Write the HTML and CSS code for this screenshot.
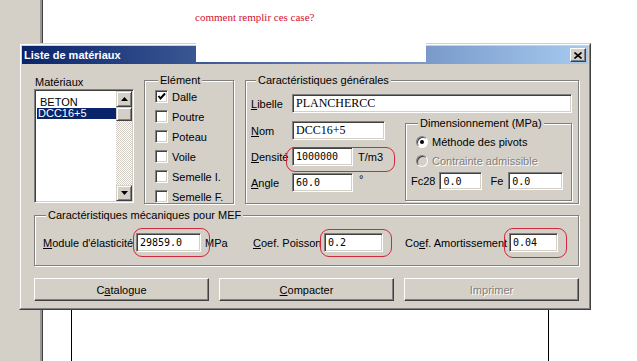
FILE: index.html
```html
<!DOCTYPE html>
<html lang="fr">
<head>
    <meta charset="UTF-8">
    <title>Liste de matériaux</title>
    <link rel="stylesheet" href="styles.css">
</head>
<body>
    <div class="desk">
        <div class="sidebar"></div>
        <div class="page">
            <p class="question">comment remplir ces case?</p>
            <div class="doc-table"></div>
        </div>
    </div>

    <div class="cover"></div>

    <div class="window">
        <div class="window-inner">
            <div class="titlebar">
                <span class="title">Liste de matériaux</span>
                <span class="close-btn">
                    <svg width="8" height="7" viewBox="0 0 8 7"><path d="M0.5 0.5 L7.5 6.5 M7.5 0.5 L0.5 6.5" stroke="#000" stroke-width="1.6"/></svg>
                </span>
            </div>

            <div class="dialog-body">
                <div class="top-row">
                    <div class="list-col">
                        <div class="list-label">Matériaux</div>
                        <div class="listbox">
                            <div class="list-items">
                                <div class="item">BETON</div>
                                <div class="item selected">DCC16+5</div>
                            </div>
                            <div class="scrollbar">
                                <div class="sb-btn">
                                    <svg width="7" height="4" viewBox="0 0 7 4"><path d="M3.5 0 L7 4 L0 4 Z" fill="#000"/></svg>
                                </div>
                                <div class="sb-thumb"></div>
                                <div class="sb-track"></div>
                                <div class="sb-btn">
                                    <svg width="7" height="4" viewBox="0 0 7 4"><path d="M0 0 L7 0 L3.5 4 Z" fill="#000"/></svg>
                                </div>
                            </div>
                        </div>
                    </div>

                    <div class="group group-element">
                        <span class="legend legend-element">Elément</span>
                        <div class="check-list">
                            <div class="check-row">
                                <span class="checkbox">
                                    <svg width="9" height="9" viewBox="0 0 9 9"><polyline points="1.5,4 3.5,6.5 8,1.5" fill="none" stroke="#000" stroke-width="2"/></svg>
                                </span>
                                Dalle
                            </div>
                            <div class="check-row"><span class="checkbox"></span>Poutre</div>
                            <div class="check-row"><span class="checkbox"></span>Poteau</div>
                            <div class="check-row"><span class="checkbox"></span>Voile</div>
                            <div class="check-row"><span class="checkbox"></span>Semelle I.</div>
                            <div class="check-row"><span class="checkbox"></span>Semelle F.</div>
                        </div>
                    </div>

                    <div class="group group-general">
                        <span class="legend">Caractéristiques générales</span>
                        <div class="field-row">
                            <label class="field-label"><u>L</u>ibelle</label>
                            <input class="field serif wide" type="text" value="PLANCHERCC">
                        </div>
                        <div class="general-lower">
                            <div class="general-fields">
                                <div class="field-row">
                                    <label class="field-label"><u>N</u>om</label>
                                    <input class="field serif w-nom" type="text" value="DCC16+5">
                                </div>
                                <div class="field-row">
                                    <label class="field-label"><u>D</u>ensité</label>
                                    <input class="field mono w-short" type="text" value="1000000">
                                    <span class="unit">T/m3</span>
                                </div>
                                <div class="field-row">
                                    <label class="field-label"><u>A</u>ngle</label>
                                    <input class="field mono w-short" type="text" value="60.0">
                                    <span class="unit degree">°</span>
                                </div>
                            </div>

                            <div class="group group-dim">
                                <span class="legend">Dimensionnement (MPa)</span>
                                <div class="radio-row"><span class="radio checked"></span>Méthode des pivots</div>
                                <div class="radio-row disabled"><span class="radio"></span>Contrainte admissible</div>
                                <div class="dim-inputs">
                                    <span>Fc28</span>
                                    <input class="field mono w-fc" type="text" value="0.0">
                                    <span class="fe-label">Fe</span>
                                    <input class="field mono w-fe" type="text" value="0.0">
                                </div>
                            </div>
                        </div>
                    </div>
                </div>

                <div class="group group-mef">
                    <span class="legend">Caractéristiques mécaniques pour MEF</span>
                    <div class="mef-row">
                        <span><u>M</u>odule d'élasticité</span>
                        <input class="field mono" type="text" value="29859.0">
                        <span class="unit">MPa</span>
                        <span><u>C</u>oef. Poisson</span>
                        <input class="field mono" type="text" value="0.2">
                        <span></span>
                        <span>Co<u>e</u>f. Amortissement</span>
                        <input class="field mono" type="text" value="0.04">
                    </div>
                </div>

                <div class="buttons">
                    <button class="btn">C<u>a</u>talogue</button>
                    <button class="btn"><u>C</u>ompacter</button>
                    <button class="btn disabled">Imprimer</button>
                </div>
            </div>
        </div>

        <span class="mark mark-densite"></span>
        <span class="mark mark-module"></span>
        <span class="mark mark-poisson"></span>
        <span class="mark mark-amort"></span>
    </div>
</body>
</html>
```

FILE: styles.css
```css
body {
    margin: 0;
    width: 637px;
    height: 361px;
    overflow: hidden;
    background-color: #fff;
    font-family: "Liberation Sans", Arial, sans-serif;
    font-size: 11px;
    color: #000;
    position: relative;
}
.desk {
    display: flex;
    height: 361px;
}
.sidebar {
    width: 42px;
    background-color: #d4d0c8;
    border-right: 1px solid #404040;
    box-shadow: inset -2px 0 #9a9892;
}
.page {
    flex: 1;
    display: flex;
    flex-direction: column;
    padding-left: 2px;
}
.question {
    margin: 11px 0 0 150px;
    font-family: "Liberation Serif", "Times New Roman", serif;
    font-size: 11px;
    line-height: 13px;
    color: #d4102e;
}
.doc-table {
    margin-top: auto;
    margin-left: 26px;
    width: 476px;
    height: 52px;
    border-left: 1px solid #000;
    border-right: 1px solid #000;
}
.cover {
    position: absolute;
    left: 196px;
    top: 42px;
    width: 230px;
    height: 20px;
    background-color: #fff;
    z-index: 2;
}

/* dialog window */
.window {
    position: absolute;
    left: 19px;
    top: 43px;
    width: 572px;
    height: 267px;
    box-sizing: border-box;
    background-color: #d4d0c8;
    border: 1px solid;
    border-color: #d4d0c8 #404040 #404040 #d4d0c8;
}
.window-inner {
    height: 100%;
    box-sizing: border-box;
    border: 1px solid;
    border-color: #fff #808080 #808080 #fff;
    padding: 1px;
}
.titlebar {
    height: 18px;
    display: flex;
    align-items: center;
    justify-content: space-between;
    padding: 0 2px;
    background: linear-gradient(to right, #0a246a, #a6caf0);
}
.title {
    color: #fff;
    font-weight: bold;
    font-size: 11px;
}
.close-btn {
    width: 16px;
    height: 14px;
    box-sizing: border-box;
    display: flex;
    align-items: center;
    justify-content: center;
    background-color: #d4d0c8;
    border: 1px solid;
    border-color: #fff #404040 #404040 #fff;
    box-shadow: inset -1px -1px #808080;
}
.dialog-body {
    padding: 12px 9px 6px 12px;
}

/* top row */
.top-row {
    display: flex;
}
.list-col {
    width: 100px;
}
.list-label {
    line-height: 13px;
    padding-left: 1px;
}
.listbox {
    height: 114px;
    box-sizing: border-box;
    display: flex;
    background-color: #fff;
    border: 1px solid;
    border-color: #808080 #fff #fff #808080;
    box-shadow: inset 1px 1px #404040, inset -1px -1px #d4d0c8;
    padding: 1px;
}
.list-items {
    flex: 1;
    padding-top: 6px;
    font-family: "Liberation Sans", Arial, sans-serif;
    font-size: 11px;
}
.item {
    height: 11px;
    line-height: 11px;
    padding-left: 4px;
}
.item.selected {
    background-color: #0a246a;
    color: #fff;
    margin-left: 1px;
    padding-left: 1px;
}
.scrollbar {
    width: 16px;
    display: flex;
    flex-direction: column;
}
.sb-btn,
.sb-thumb {
    height: 16px;
    box-sizing: border-box;
    display: flex;
    align-items: center;
    justify-content: center;
    background-color: #d4d0c8;
    border: 1px solid;
    border-color: #d4d0c8 #404040 #404040 #d4d0c8;
    box-shadow: inset 1px 1px #fff, inset -1px -1px #808080;
}
.sb-thumb {
    height: 14px;
}
.sb-track {
    flex: 1;
    background: repeating-conic-gradient(#d4d0c8 0 25%, #fff 0 50%) 0 0 / 2px 2px;
}

/* group boxes */
.group {
    position: relative;
    box-sizing: border-box;
    border: 1px solid #808080;
    box-shadow: 1px 1px 0 #fff, inset 1px 1px 0 #fff;
}
.legend {
    position: absolute;
    top: -7px;
    left: 10px;
    padding: 0 2px;
    line-height: 13px;
    white-space: nowrap;
    background-color: #d4d0c8;
}
.group-element {
    margin: 4px 0 0 10px;
    width: 90px;
    height: 124px;
    padding: 9px 0 0 10px;
}
.legend-element {
    left: 13px;
}
.check-list {
    display: flex;
    flex-direction: column;
    gap: 7px;
}
.check-row {
    display: flex;
    align-items: center;
    gap: 4px;
    height: 13px;
}
.checkbox {
    width: 13px;
    height: 13px;
    box-sizing: border-box;
    display: flex;
    align-items: center;
    justify-content: center;
    background-color: #fff;
    border: 1px solid;
    border-color: #808080 #fff #fff #808080;
    box-shadow: inset 1px 1px #404040, inset -1px -1px #d4d0c8;
}
.group-general {
    margin: 4px 0 0 11px;
    flex: 1;
    height: 124px;
    padding: 13px 6px 0 5px;
}
.field-row {
    display: flex;
    align-items: center;
    height: 19px;
}
.general-lower {
    display: flex;
    justify-content: space-between;
    margin-top: 8px;
}
.general-fields {
    display: flex;
    flex-direction: column;
    gap: 7px;
}
.field-label {
    width: 41px;
}
.field {
    height: 19px;
    box-sizing: border-box;
    margin: 0;
    padding: 0 3px;
    background-color: #fff;
    border: 1px solid;
    border-color: #808080 #fff #fff #808080;
    box-shadow: inset 1px 1px #404040, inset -1px -1px #d4d0c8;
    outline: none;
    color: #000;
}
.serif {
    font-family: "Liberation Serif", "Times New Roman", serif;
    font-size: 12px;
}
.mono {
    font-family: "DejaVu Sans Mono", monospace;
    font-size: 10px;
}
.wide {
    flex: 1;
}
.w-nom {
    width: 93px;
}
.w-short {
    width: 61px;
}
.unit {
    margin-left: 5px;
}
.degree {
    align-self: flex-start;
    margin-left: 6px;
}

.group-dim {
    width: 167px;
    height: 78px;
    margin-top: 2px;
    padding: 12px 0 0 10px;
}
.group-dim .legend {
    left: 12px;
}
.radio-row {
    display: flex;
    align-items: center;
    gap: 4px;
    height: 12px;
    margin-bottom: 7px;
}
.radio-row.disabled {
    color: #808080;
    text-shadow: 1px 1px #fff;
}
.radio {
    width: 12px;
    height: 12px;
    box-sizing: border-box;
    border-radius: 50%;
    background-color: #fff;
    border: 1px solid;
    border-color: #808080 #fff #fff #808080;
    box-shadow: inset 1px 1px #404040;
    position: relative;
}
.radio-row.disabled .radio {
    background-color: #d4d0c8;
}
.radio.checked::after {
    content: "";
    position: absolute;
    left: 3px;
    top: 3px;
    width: 4px;
    height: 4px;
    border-radius: 50%;
    background-color: #000;
}
.dim-inputs {
    display: flex;
    align-items: center;
    margin-left: -5px;
    margin-top: -2px;
}
.dim-inputs .field {
    height: 18px;
}
.w-fc {
    width: 43px;
    margin-left: 4px;
}
.fe-label {
    margin-left: 8px;
}
.w-fe {
    width: 55px;
    margin-left: 5px;
}

/* MEF */
.group-mef {
    margin-top: 11px;
    height: 51px;
    padding: 17px 0 0 8px;
}
.group-mef .legend {
    left: 11px;
}
.mef-row {
    display: grid;
    grid-template-columns: 93px 65px 52px 71px 59px 22px 104px 49px;
    align-items: center;
    height: 19px;
    white-space: nowrap;
}
.mef-row .unit {
    margin-left: 4px;
}

/* buttons */
.buttons {
    display: grid;
    grid-template-columns: repeat(3, 1fr);
    gap: 10px;
    margin-top: 12px;
}
.btn {
    height: 23px;
    box-sizing: border-box;
    font-family: "Liberation Sans", Arial, sans-serif;
    font-size: 11px;
    color: #000;
    background-color: #d4d0c8;
    border: 1px solid;
    border-color: #fff #404040 #404040 #fff;
    box-shadow: inset -1px -1px #808080;
    padding: 0;
}
.btn.disabled {
    color: #808080;
    text-shadow: 1px 1px #fff;
}

/* red annotation marks */
.mark {
    position: absolute;
    box-sizing: border-box;
    border: 1px solid #d0283c;
    border-radius: 9px;
}
.mark-densite {
    left: 266px;
    top: 103px;
    width: 109px;
    height: 25px;
}
.mark-module {
    left: 113px;
    top: 184px;
    width: 77px;
    height: 29px;
}
.mark-poisson {
    left: 300px;
    top: 185px;
    width: 72px;
    height: 28px;
}
.mark-amort {
    left: 484px;
    top: 184px;
    width: 63px;
    height: 30px;
}
```
